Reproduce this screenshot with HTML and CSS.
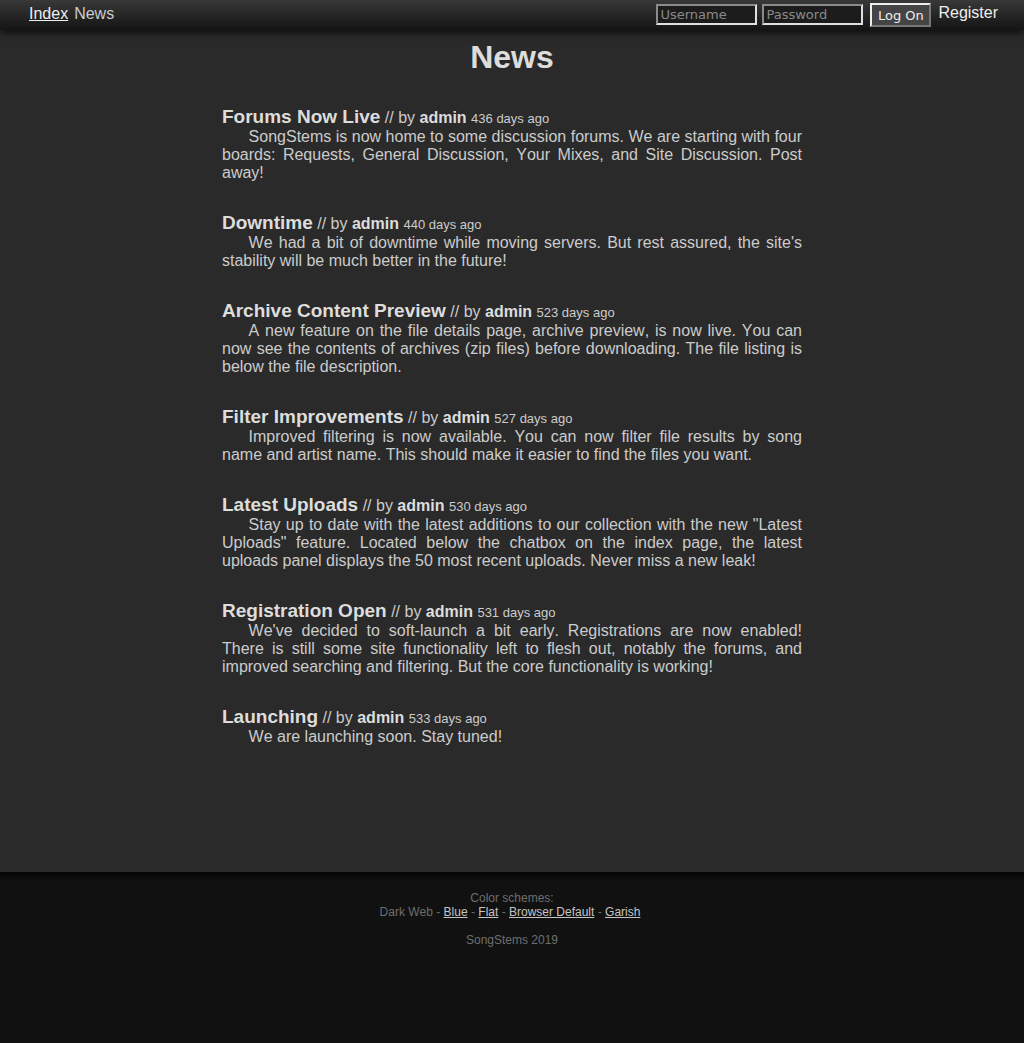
FILE: index.html
```html
<!DOCTYPE html>
<html>
<head>
<meta charset="utf-8">
<title>News</title>
<link rel="stylesheet" href="styles.css">
</head>
<body>
<div class="page">
  <header class="topbar">
    <nav class="crumbs">
      <a href="#" class="crumb-link">Index</a>
      <span class="crumb-current">News</span>
    </nav>
    <form class="login">
      <input class="field" type="text" placeholder="Username">
      <input class="field" type="password" placeholder="Password">
      <button class="btn" type="button">Log On</button>
      <a href="#" class="register">Register</a>
    </form>
  </header>
  <main class="main">
    <h1 class="page-title">News</h1>
    <div class="news">
      <article class="item">
        <div class="item-head"><span class="item-title">Forums Now Live</span> <span>// by</span> <b class="author">admin</b> <span class="age">436 days ago</span></div>
        <p class="item-body">SongStems is now home to some discussion forums. We are starting with four boards: Requests, General Discussion, Your Mixes, and Site Discussion. Post away!</p>
      </article>
      <article class="item">
        <div class="item-head"><span class="item-title">Downtime</span> <span>// by</span> <b class="author">admin</b> <span class="age">440 days ago</span></div>
        <p class="item-body">We had a bit of downtime while moving servers. But rest assured, the site's stability will be much better in the future!</p>
      </article>
      <article class="item">
        <div class="item-head"><span class="item-title">Archive Content Preview</span> <span>// by</span> <b class="author">admin</b> <span class="age">523 days ago</span></div>
        <p class="item-body">A new feature on the file details page, archive preview, is now live. You can now see the contents of archives (zip files) before downloading. The file listing is below the file description.</p>
      </article>
      <article class="item">
        <div class="item-head"><span class="item-title">Filter Improvements</span> <span>// by</span> <b class="author">admin</b> <span class="age">527 days ago</span></div>
        <p class="item-body">Improved filtering is now available. You can now filter file results by song name and artist name. This should make it easier to find the files you want.</p>
      </article>
      <article class="item">
        <div class="item-head"><span class="item-title">Latest Uploads</span> <span>// by</span> <b class="author">admin</b> <span class="age">530 days ago</span></div>
        <p class="item-body">Stay up to date with the latest additions to our collection with the new "Latest Uploads" feature. Located below the chatbox on the index page, the latest uploads panel displays the 50 most recent uploads. Never miss a new leak!</p>
      </article>
      <article class="item">
        <div class="item-head"><span class="item-title">Registration Open</span> <span>// by</span> <b class="author">admin</b> <span class="age">531 days ago</span></div>
        <p class="item-body">We've decided to soft-launch a bit early. Registrations are now enabled! There is still some site functionality left to flesh out, notably the forums, and improved searching and filtering. But the core functionality is working!</p>
      </article>
      <article class="item">
        <div class="item-head"><span class="item-title">Launching</span> <span>// by</span> <b class="author">admin</b> <span class="age">533 days ago</span></div>
        <p class="item-body">We are launching soon. Stay tuned!</p>
      </article>
    </div>
  </main>
</div>
<footer class="footer">
  <div class="schemes-label">Color schemes:</div>
  <div class="schemes">Dark Web - <a href="#">Blue</a> - <a href="#">Flat</a> - <a href="#">Browser Default</a> - <a href="#">Garish</a></div>
  <div class="copy">SongStems 2019</div>
</footer>
</body>
</html>
```
FILE: styles.css
```css
html, body {
  margin: 0;
  padding: 0;
}
body {
  background: #111111;
  font-family: "Liberation Sans", Arial, sans-serif;
  color: #cccccc;
  font-kerning: none;
}
.page {
  background: #2a2a2a;
  min-height: 872px;
  display: flex;
  flex-direction: column;
}
.topbar {
  height: 30px;
  display: flex;
  align-items: center;
  justify-content: space-between;
  padding: 0 26px 0 29px;
  background: linear-gradient(#383838, #141414);
  box-shadow: 0 2px 8px rgba(0, 0, 0, 0.8);
  position: relative;
  z-index: 1;
}
.crumbs {
  font-size: 16px;
  display: flex;
  gap: 6px;
  padding-bottom: 2px;
}
.crumb-link {
  color: #eeeeee;
}
.crumb-current {
  color: #cccccc;
}
.login {
  display: flex;
  align-items: center;
  margin: 0;
}
.field {
  box-sizing: border-box;
  width: 101px;
  height: 21px;
  margin: 0 5px 1px 0;
  padding: 1px 2px;
  background: #1c1c1c;
  border: 2px solid;
  border-color: #8a8a8a #e0e0e0 #e0e0e0 #8a8a8a;
  color: #dddddd;
  font-family: "DejaVu Sans", sans-serif;
  font-size: 13px;
}
.field::placeholder {
  color: #8a8a8a;
}
.btn {
  box-sizing: border-box;
  width: 61px;
  height: 24px;
  margin: 0 0 0 2px;
  padding: 0;
  background: #444444;
  border: 2px solid;
  border-color: #eeeeee #777777 #777777 #eeeeee;
  color: #eeeeee;
  font-family: "DejaVu Sans", sans-serif;
  font-size: 13px;
}
.register {
  margin-left: 7px;
  color: #eeeeee;
  text-decoration: none;
  font-size: 16px;
  padding-bottom: 4px;
}
.main {
  flex: 1;
}
.page-title {
  margin: 9px 0 0;
  text-align: center;
  font-size: 32px;
  line-height: 37px;
  color: #dddddd;
}
.news {
  width: 580px;
  margin: 31px auto 0;
}
.item {
  margin-bottom: 31px;
}
.item-head {
  font-size: 16px;
  line-height: 21px;
  height: 21px;
  color: #cccccc;
}
.item-head span,
.item-head b {
  line-height: 1;
}
.item-title {
  font-size: 19px;
  font-weight: bold;
  color: #dddddd;
}
.author {
  color: #dddddd;
}
.age {
  font-size: 13px;
}
.item-body {
  margin: 0;
  font-size: 16px;
  line-height: 18px;
  text-align: justify;
  text-indent: 26.6px;
  color: #cccccc;
}
.footer {
  background: linear-gradient(#050505, #111111 10px);
  text-align: center;
  font-size: 12px;
  line-height: 14px;
  color: #6e6e6e;
  padding-top: 19px;
  min-height: 152px;
  box-sizing: border-box;
}
.footer a {
  color: #c4c4c4;
}
.schemes {
  padding-right: 4px;
}
.copy {
  margin-top: 14px;
}
```
